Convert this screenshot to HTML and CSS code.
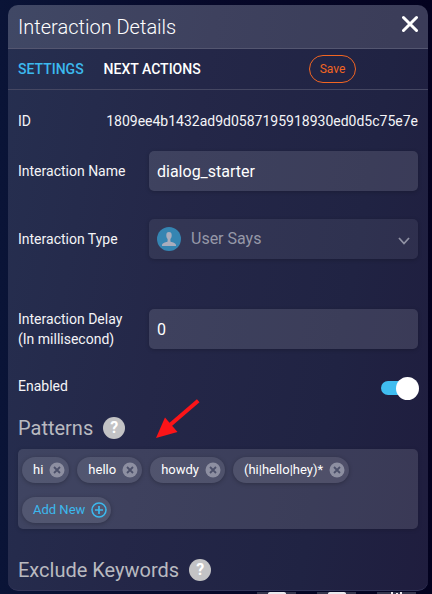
FILE: index.html
```html
<!DOCTYPE html>
<html lang="en">
<head>
<meta charset="utf-8">
<meta name="viewport" content="width=device-width, initial-scale=1">
<title>Interaction Details</title>
<link rel="stylesheet" href="styles.css">
</head>
<body>
<main class="panel">
  <header class="panel-header">
    <h1>Interaction Details</h1>
    <button class="close" type="button" aria-label="Close">
      <svg width="16" height="18" viewBox="0 0 16 18"><path d="M1.500 2.500l13 13M14.500 2.500l-13 13" stroke="#fff" stroke-width="3" stroke-linecap="round"/></svg>
    </button>
  </header>
  <nav class="tabs">
    <a class="active" href="#settings">SETTINGS</a>
    <a href="#next">NEXT ACTIONS</a>
    <button class="save" type="button">Save</button>
  </nav>
  <form class="settings" id="settings">
    <div class="row id-row"><span>ID</span><span>1809ee4b1432ad9d0587195918930ed0d5c75e7e</span></div>
    <div class="row field-row">
      <label for="name">Interaction Name</label>
      <input class="box" id="name" type="text" value="dialog_starter">
    </div>
    <div class="row field-row type-row">
      <label for="type">Interaction Type</label>
      <div class="select-wrap">
        <svg class="user" width="24" height="24" viewBox="0 0 24 24"><circle cx="12" cy="12" r="12" fill="#3585b2"/><path d="M12 5c-1.900 0-2.700 1.200-2.700 3.200 0 1.700.5 3 1.300 3.700v2c0 .6-.5 1-1.200 1.200C7 15.900 5 16.400 5 18v1h14v-1c0-1.600-2-2.100-4.400-2.900-.7-.2-1.200-.6-1.200-1.200v-2c.8-.7 1.300-2 1.300-3.700C14.700 6.200 13.900 5 12 5z" fill="#a9adbd"/></svg>
        <select class="box" id="type" disabled><option>User Says</option></select>
        <svg class="chevron" width="12" height="8" viewBox="0 0 12 8"><path d="M1 1l5 5.500L11 1" fill="none" stroke="#8f91a3" stroke-width="1.800"/></svg>
      </div>
    </div>
    <div class="row field-row delay-row">
      <label for="delay">Interaction Delay<br>(In millisecond)</label>
      <input class="box" id="delay" type="text" value="0">
    </div>
    <div class="row enabled-row">
      <label for="enabled">Enabled</label>
      <input class="switch" id="enabled" type="checkbox" role="switch" checked>
    </div>
    <div class="section-title">
      <h2>Patterns</h2>
      <button class="help" type="button" aria-label="Help for patterns">?</button>
      <svg class="arrow" width="46" height="42" viewBox="0 0 46 42"><path d="M43.200 1.800L15 26" stroke="#fb1418" stroke-width="4"/><path d="M1 39L10 18.500L22.500 33z" fill="#fb1418"/></svg>
    </div>
    <div class="chips">
      <span class="chip">hi <button type="button" aria-label="Remove hi"><svg width="16" height="16" viewBox="0 0 16 16"><circle cx="8" cy="8" r="7.500" fill="#8d8fa1"/><path d="M5 5l6 6M11 5l-6 6" stroke="#4c506a" stroke-width="1.800"/></svg></button></span>
      <span class="chip">hello <button type="button" aria-label="Remove hello"><svg width="16" height="16" viewBox="0 0 16 16"><circle cx="8" cy="8" r="7.500" fill="#8d8fa1"/><path d="M5 5l6 6M11 5l-6 6" stroke="#4c506a" stroke-width="1.800"/></svg></button></span>
      <span class="chip">howdy <button type="button" aria-label="Remove howdy"><svg width="16" height="16" viewBox="0 0 16 16"><circle cx="8" cy="8" r="7.500" fill="#8d8fa1"/><path d="M5 5l6 6M11 5l-6 6" stroke="#4c506a" stroke-width="1.800"/></svg></button></span>
      <span class="chip">(hi|hello|hey)* <button type="button" aria-label="Remove (hi|hello|hey)*"><svg width="16" height="16" viewBox="0 0 16 16"><circle cx="8" cy="8" r="7.500" fill="#8d8fa1"/><path d="M5 5l6 6M11 5l-6 6" stroke="#4c506a" stroke-width="1.800"/></svg></button></span>
      <button class="chip add" type="button">Add New <svg width="16" height="16" viewBox="0 0 16 16"><circle cx="8" cy="8" r="7" fill="none" stroke="#3cb9ee" stroke-width="1.500"/><path d="M8 4v8M4 8h8" stroke="#3cb9ee" stroke-width="1.700"/></svg></button>
    </div>
    <div class="section-title exclude">
      <h2>Exclude Keywords</h2>
      <button class="help" type="button" aria-label="Help for exclude keywords">?</button>
    </div>
  </form>
</main>
<footer class="dock">
  <button type="button" aria-label="Open"><svg width="18" height="6" viewBox="0 0 18 6"><path d="M0 6V1.500Q0 0 2 0H16Q18 0 18 1.500V6z" fill="#e9e9ee"/></svg></button>
  <button type="button" aria-label="Copy"><svg width="18" height="6" viewBox="0 0 18 6"><path d="M0 6V1.500Q0 0 2 0H16Q18 0 18 1.500V6z" fill="#e9e9ee"/></svg></button>
  <button type="button" aria-label="Adjust"><svg width="18" height="6" viewBox="0 0 18 6"><path d="M4 0v6M9 1v5M13 0v6" stroke="#e9e9ee" stroke-width="2"/></svg></button>
</footer>
</body>
</html>
```
FILE: styles.css
```css
* { box-sizing: border-box; }
html { height: 100%; overflow: hidden; }
body {
  margin: 0;
  height: 100%;
  overflow: hidden;
  padding: 5px 4px 0 8px;
  background: linear-gradient(90deg, #0a1437, #060829 50%, #03021f);
  color: #f4f4f7;
  font: 14px/20px Roboto, "Liberation Sans", sans-serif;
}
button { font: inherit; color: inherit; background: none; border: 0; padding: 0; cursor: pointer; }
svg { display: block; fill: none; }
h1, h2 { margin: 0; font-size: 20px; }
.panel {
  border-radius: 10px;
  overflow: hidden;
  background: linear-gradient(100deg, #262f50, #242748 40%, #202343 75%, #1f1d3e);
  border-bottom: 1px solid #34365a;
}
.panel-header {
  display: flex;
  align-items: center;
  justify-content: space-between;
  height: 44px;
  padding: 0 10px;
  background: rgba(255, 255, 255, .12);
  border-bottom: 1px solid #545670;
}
h1 { font-weight: 300; line-height: 24px; color: #fff; }
.close { padding-bottom: 6px; }
.tabs {
  display: flex;
  align-items: center;
  height: 41px;
  gap: 20px;
  padding: 0 72px 0 10px;
  border-bottom: 1px solid #454762;
}
.tabs a { color: #fff; font-weight: 500; text-decoration: none; }
.tabs .active { color: #3cb9ee; }
.save {
  width: 47px;
  height: 28px;
  margin-left: auto;
  border: 1px solid #f26522;
  border-radius: 14px;
  color: #f26522;
  font-size: 12px;
}
.settings { padding: 20px 10px 8px; }
.row { display: flex; align-items: center; justify-content: space-between; }
.id-row { height: 21px; margin-bottom: 20px; }
.field-row { gap: 8px; height: 40px; margin-bottom: 28px; }
.field-row label { width: 123px; flex: none; }
.box {
  flex: 1;
  min-width: 0;
  width: 100%;
  height: 40px;
  padding: 0 8px;
  border: 0;
  border-radius: 5px;
  background: rgba(255, 255, 255, .12);
  box-shadow: 0 1px 4px rgba(0, 0, 0, .2);
  color: #fff;
  font: 16px/20px Roboto, "Liberation Sans", sans-serif;
}
.select-wrap { position: relative; flex: 1; }
.select-wrap .box {
  appearance: none;
  padding-left: 42px;
  background: rgba(255, 255, 255, .07);
  color: #9698a8;
  opacity: 1;
}
.user { position: absolute; left: 8px; top: 8px; }
.chevron { position: absolute; right: 8px; top: 18px; }
.type-row { margin-bottom: 50px; }
.enabled-row { height: 20px; }
.delay-row { margin-bottom: 27px; }
.switch {
  appearance: none;
  position: relative;
  width: 37px;
  height: 14px;
  margin: 4px 0 0;
  border-radius: 7px;
  background: #40bdf0;
}
.switch::after {
  content: "";
  position: absolute;
  right: -1px;
  top: -4px;
  width: 23px;
  height: 23px;
  border-radius: 50%;
  background: #fff;
}
.section-title { position: relative; display: flex; align-items: center; gap: 10px; height: 24px; margin-top: 20px; }
h2 { color: #b9bac0; font-weight: 400; line-height: 24px; }
.help { width: 22px; height: 22px; border-radius: 50%; background: #c3c3c5; color: #fff; font-weight: 700; font-size: 16px; line-height: 22px; }
.arrow { position: absolute; left: 137px; top: -17px; }
.chips {
  display: flex;
  flex-wrap: wrap;
  gap: 14px 8px;
  margin-top: 9px;
  padding: 8px 4px 6px;
  border-radius: 5px;
  background: rgba(255, 255, 255, .12);
  box-shadow: 0 1px 4px rgba(0, 0, 0, .15);
}
.chip {
  display: flex;
  align-items: center;
  gap: 6px;
  height: 26px;
  padding: 0 4px 0 11px;
  border-radius: 13px;
  background: rgba(255, 255, 255, .1);
  box-shadow: 0 1px 4px rgba(0, 0, 0, .25);
  color: #fff;
  font-size: 13px;
}
.add { color: #3cb9ee; }
.exclude { margin-top: 29px; }
.dock { display: flex; justify-content: flex-end; gap: 21px; padding: 1px 12px 0 0; }
.dock button { display: flex; justify-content: center; width: 39px; height: 30px; background: #34364e; }
```
